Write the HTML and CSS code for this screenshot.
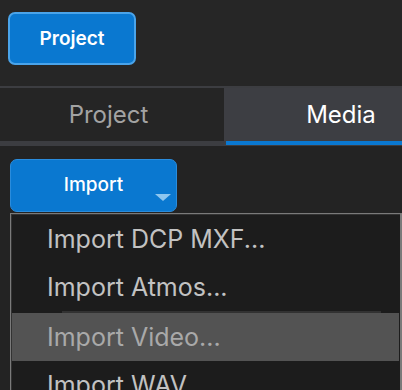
FILE: index.html
```html
<!DOCTYPE html>
<html lang="en">
  <head>
    <meta charset="UTF-8" />
    <meta name="viewport" content="width=device-width, initial-scale=1" />
    <title>Media Import</title>
    <link rel="stylesheet" href="styles.css">
  </head>
  <body>
    <div id="top-bar">
      <button class="btn-project">Project</button>
    </div>

    <div id="tabs">
      <div class="tab">
        <span class="tab-label">Project</span>
        <span class="tab-line"></span>
      </div>
      <div class="tab active">
        <span class="tab-label">Media</span>
        <span class="tab-line"></span>
      </div>
    </div>

    <div id="media-panel">
      <button class="btn-import">
        Import
        <span class="caret"></span>
      </button>
      <ul id="import-menu">
        <li>Import DCP MXF...</li>
        <li>Import Atmos...</li>
        <li class="sep"></li>
        <li class="hover">Import Video...</li>
        <li>Import WAV</li>
      </ul>
    </div>
  </body>
</html>
```

FILE: styles.css
```css
html, body {
  margin: 0;
  padding: 0;
}
body {
  width: 402px;
  height: 390px;
  overflow: hidden;
  background: #232323;
  font-family: Inter, "Liberation Sans", Arial, sans-serif;
}
button {
  font-family: inherit;
  color: #fff;
  cursor: pointer;
}
#top-bar {
  background: #262626;
  height: 86px;
  padding: 12px 8px 0;
  box-sizing: border-box;
}
.btn-project {
  width: 128px;
  height: 53px;
  background: #0a78d0;
  border: 2px solid #4aa4ea;
  border-radius: 7px;
  font-size: 19px;
  font-weight: 600;
  padding: 0 0 1px;
}
#tabs {
  display: flex;
  width: 448px;
  border-top: 2px solid #3c3d41;
}
.tab {
  width: 224px;
  height: 57px;
  display: flex;
  flex-direction: column;
  background: #252525;
  border-bottom: 1px solid #3c3d41;
}
.tab-label {
  flex: 1;
  display: flex;
  align-items: center;
  justify-content: center;
  font-size: 24px;
  color: #a3a3a3;
  padding-right: 7px;
}
.tab-line {
  height: 4px;
  background: #3c3d41;
}
.tab.active {
  background: #3d3e43;
}
.tab.active .tab-label {
  color: #fff;
  padding-right: 0;
  padding-left: 10px;
}
.tab.active .tab-line {
  margin-left: 2px;
  background: #0a78d0;
}
#media-panel {
  padding: 13px 0 0 10px;
}
.btn-import {
  position: relative;
  display: block;
  width: 167px;
  height: 53px;
  background: #0a78d0;
  border: 1px solid #2a8cdc;
  border-radius: 7px;
  font-size: 19px;
  font-weight: 500;
  padding: 0 0 2px;
}
.caret {
  position: absolute;
  right: 5px;
  bottom: 10px;
  width: 0;
  height: 0;
  border-left: 8px solid transparent;
  border-right: 8px solid transparent;
  border-top: 7px solid #8ec6ef;
}
#import-menu {
  list-style: none;
  margin: 1px 0 0;
  padding: 1px 1px 0;
  background: #1c1c1c;
  border: 1px solid #7a7a7a;
  border-right-width: 2px;
  border-bottom: none;
  box-shadow: inset 1px 1px 0 #333;
  height: 200px;
}
#import-menu li {
  height: 48px;
  display: flex;
  align-items: center;
  padding-left: 35px;
  font-size: 25px;
  color: #c2c2c2;
}
#import-menu li.sep {
  height: 2px;
  padding: 0;
  margin: 0 18px 0 50px;
  background: #323232;
}
#import-menu li.hover {
  background: #535353;
  color: #a9a9a9;
}
```
